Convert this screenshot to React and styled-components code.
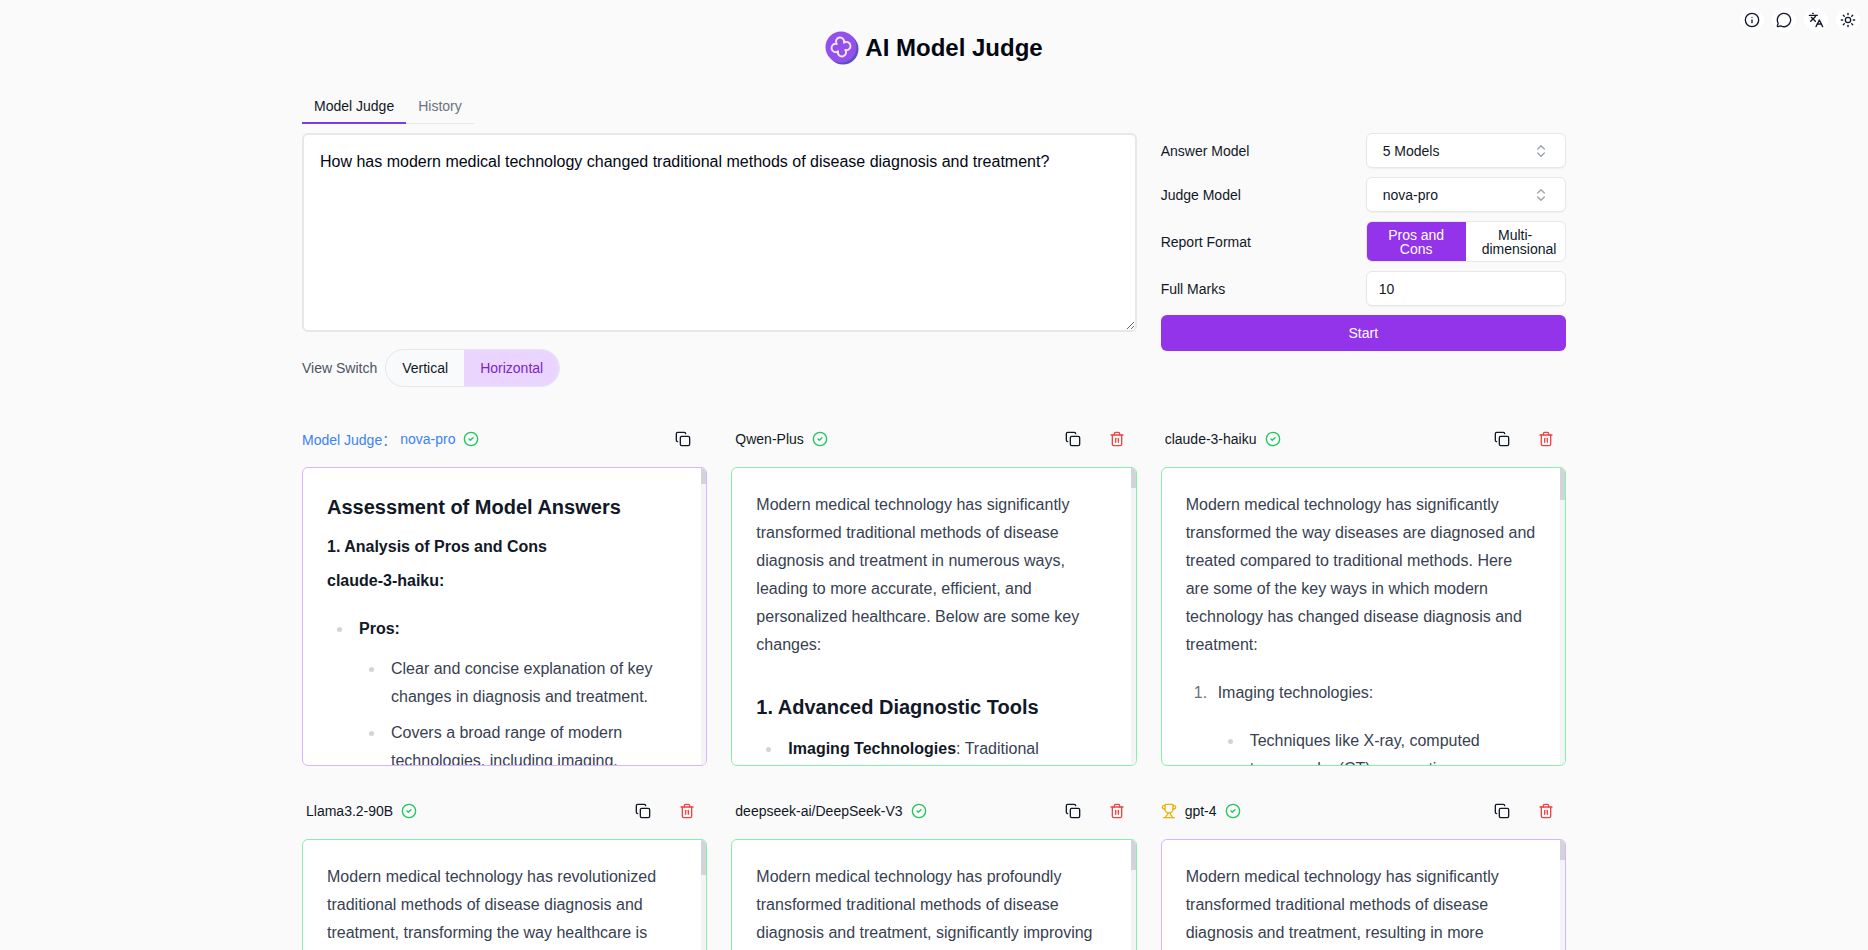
import React from "react"
import styled, { createGlobalStyle } from "styled-components"
import { Info, MessageCircle, Languages, Sun, ChevronsUpDown, Copy, Trash2, CircleCheck, Trophy } from "lucide-react"

const GlobalStyle = createGlobalStyle`
  html, body {
    margin: 0;
    height: 100%;
    overflow: hidden;
    background: #fafafa;
    font-family: "Liberation Sans", Arial, "Noto Sans CJK SC", sans-serif;
    color: #111827;
  }
  * { box-sizing: border-box; }
`

const Logo = () => (
  <svg width="34" height="34" viewBox="0 0 34 34">
    <circle cx="18" cy="18" r="15.5" fill="#5b4ec7" />
    <circle cx="16" cy="16" r="15.5" fill="#9350ea" />
    <path
      d="M12.33 12.33A4.1 4.1 0 1 1 19.67 12.33A4.1 4.1 0 1 1 19.67 19.67A4.1 4.1 0 1 1 12.33 19.67A4.1 4.1 0 1 1 12.33 12.33Z"
      transform="rotate(-10 16 16)"
      fill="none"
      stroke="#f3e8ff"
      strokeWidth="1.9"
      strokeLinejoin="round"
    />
  </svg>
)

const Card = ({ title, judge, trophy, purple, removable = true, thumb, children }) => (
  <Column>
    <CardHeader $flush={judge || trophy}>
      <CardTitle $judge={judge}>
        {trophy && <Trophy size={16} color="#eab308" />}
        {judge ? <><JudgeLabel>Model Judge：</JudgeLabel><span>{title}</span></> : <span>{title}</span>}
        <CircleCheck size={16} color="#22c55e" />
      </CardTitle>
      <CardActions $single={!removable}>
        <IconButton><Copy size={16} color="#111827" /></IconButton>
        {removable && <IconButton><Trash2 size={16} color="#ef4444" /></IconButton>}
      </CardActions>
    </CardHeader>
    <CardBody $purple={purple}>
      <Prose>{children}</Prose>
      <ScrollTrack><ScrollThumb $height={thumb} /></ScrollTrack>
    </CardBody>
  </Column>
)

const App = () => {
  return <Page>
    <GlobalStyle />
    <Header>
      <span />
      <Brand><Logo /><Title>AI Model Judge</Title></Brand>
      <TopActions>
        <RoundButton><Info size={16} /></RoundButton>
        <RoundButton><MessageCircle size={16} /></RoundButton>
        <RoundButton><Languages size={16} /></RoundButton>
        <RoundButton><Sun size={16} /></RoundButton>
      </TopActions>
    </Header>

    <Main>
      <Tabs>
        <Tab $active>Model Judge</Tab>
        <Tab>History</Tab>
      </Tabs>

      <Grid>
        <FormLeft>
          <Question
            readOnly
            defaultValue="How has modern medical technology changed traditional methods of disease diagnosis and treatment?"
          />
          <ViewRow>
            <ViewLabel>View Switch</ViewLabel>
            <Switch>
              <SwitchItem>Vertical</SwitchItem>
              <SwitchItem $on>Horizontal</SwitchItem>
            </Switch>
          </ViewRow>
        </FormLeft>

        <Settings>
          <SettingRow>
            <label>Answer Model</label>
            <SelectBox>5 Models<ChevronsUpDown size={16} color="#9ca3af" /></SelectBox>
          </SettingRow>
          <SettingRow>
            <label>Judge Model</label>
            <SelectBox>nova-pro<ChevronsUpDown size={16} color="#9ca3af" /></SelectBox>
          </SettingRow>
          <SettingRow>
            <label>Report Format</label>
            <Segments>
              <Segment $on>Pros and Cons</Segment>
              <Segment>Multi-dimensional</Segment>
            </Segments>
          </SettingRow>
          <SettingRow>
            <label>Full Marks</label>
            <MarksInput readOnly defaultValue="10" />
          </SettingRow>
          <StartButton>Start</StartButton>
        </Settings>
      </Grid>

      <Results>
        <Card title="nova-pro" judge purple removable={false} thumb={16}>
          <h3>Assessment of Model Answers</h3>
          <h4>1. Analysis of Pros and Cons</h4>
          <p><strong>claude-3-haiku:</strong></p>
          <ul>
            <li>
              <strong>Pros:</strong>
              <ul>
                <li>Clear and concise explanation of key changes in diagnosis and treatment.</li>
                <li>Covers a broad range of modern technologies, including imaging, telemedicine and robotics.</li>
              </ul>
            </li>
          </ul>
        </Card>

        <Card title="Qwen-Plus" thumb={20}>
          <p>Modern medical technology has significantly transformed traditional methods of disease diagnosis and treatment in numerous ways, leading to more accurate, efficient, and personalized healthcare. Below are some key changes:</p>
          <h3>1. Advanced Diagnostic Tools</h3>
          <ul>
            <li><strong>Imaging Technologies</strong>: Traditional diagnostic methods relied on physical examination.</li>
          </ul>
        </Card>

        <Card title="claude-3-haiku" thumb={32}>
          <p>Modern medical technology has significantly transformed the way diseases are diagnosed and treated compared to traditional methods. Here are some of the key ways in which modern technology has changed disease diagnosis and treatment:</p>
          <ol>
            <li>
              Imaging technologies:
              <ul>
                <li>Techniques like X-ray, computed tomography (CT), magnetic resonance imaging (MRI)</li>
              </ul>
            </li>
          </ol>
        </Card>

        <Card title="Llama3.2-90B" thumb={35}>
          <p>Modern medical technology has revolutionized traditional methods of disease diagnosis and treatment, transforming the way healthcare is delivered and improving patient outcomes.</p>
        </Card>

        <Card title="deepseek-ai/DeepSeek-V3" thumb={30}>
          <p>Modern medical technology has profoundly transformed traditional methods of disease diagnosis and treatment, significantly improving accuracy, efficiency, and patient outcomes.</p>
        </Card>

        <Card title="gpt-4" trophy purple thumb={20}>
          <p>Modern medical technology has significantly transformed traditional methods of disease diagnosis and treatment, resulting in more accurate and effective care.</p>
        </Card>
      </Results>
    </Main>
  </Page>
}

const Page = styled.div`
  height: 100vh;
  overflow: hidden;
`

const Header = styled.header`
  display: grid;
  grid-template-columns: 1fr auto 1fr;
  height: 93px;
`

const Brand = styled.div`
  display: flex;
  align-items: center;
  gap: 6px;
  height: 64px;
  padding-top: 32px;
`

const Title = styled.h1`
  margin: 0;
  font-size: 24px;
  line-height: 32px;
  font-weight: 700;
  color: #030712;
`

const TopActions = styled.div`
  display: flex;
  justify-content: flex-end;
  gap: 8px;
  height: 24px;
  margin-top: 8px;
  padding-right: 8px;
`

const RoundButton = styled.button`
  display: flex;
  align-items: center;
  justify-content: center;
  width: 24px;
  height: 24px;
  padding: 0;
  border: 0;
  border-radius: 50%;
  background: #fff;
  color: #111827;
`

const Main = styled.main`
  width: 1264px;
  margin: 0 auto;
`

const Tabs = styled.div`
  display: inline-flex;
  border-bottom: 1px solid #e5e7eb;
  height: 31px;
  vertical-align: top;
`

const Tab = styled.div`
  height: 31px;
  padding: 5px 12px 0;
  font-size: 14px;
  line-height: 16px;
  color: ${({ $active }) => ($active ? "#111827" : "#6b7280")};
  border-bottom: 2px solid ${({ $active }) => ($active ? "#7c3aed" : "transparent")};
`

const Grid = styled.div`
  display: grid;
  grid-template-columns: repeat(3, 1fr);
  column-gap: 24px;
  margin-top: 9px;
`

const FormLeft = styled.div`
  grid-column: span 2;
`

const Question = styled.textarea`
  display: block;
  width: 100%;
  height: 199px;
  padding: 15px 16px;
  border: 2px solid #e5e7eb;
  border-radius: 6px;
  background: #fff;
  font: 16px/24px "Liberation Sans", Arial, sans-serif;
  color: #030712;
  outline: none;
`

const ViewRow = styled.div`
  display: flex;
  align-items: center;
  gap: 8px;
  margin-top: 17px;
`

const ViewLabel = styled.span`
  font-size: 14px;
  color: #4b5563;
`

const Switch = styled.div`
  display: flex;
  height: 38px;
  border: 1px solid #e5e7eb;
  border-radius: 19px;
  overflow: hidden;
  background: #f9fafb;
`

const SwitchItem = styled.div`
  display: flex;
  align-items: center;
  padding: 0 16px;
  font-size: 14px;
  color: ${({ $on }) => ($on ? "#7e22ce" : "#111827")};
  background: ${({ $on }) => ($on ? "#e9d5ff" : "transparent")};
`

const Settings = styled.div`
  display: flex;
  flex-direction: column;
  gap: 9px;
`

const SettingRow = styled.div`
  display: grid;
  grid-template-columns: 205px 200px;
  align-items: center;
  font-size: 14px;
  color: #111827;
`

const SelectBox = styled.div`
  display: flex;
  align-items: center;
  justify-content: space-between;
  height: 35px;
  padding: 0 16px;
  background: #fff;
  border: 1px solid #e5e7eb;
  border-radius: 6px;
  box-shadow: 0 1px 1px rgba(0, 0, 0, 0.04);
  font-size: 14px;
`

const Segments = styled.div`
  display: grid;
  grid-template-columns: 99px 1fr;
  height: 41px;
  background: #fff;
  border: 1px solid #e5e7eb;
  border-radius: 6px;
  overflow: hidden;
`

const Segment = styled.div`
  align-self: center;
  min-width: 0;
  padding: 0 16px;
  text-align: center;
  font-size: 14px;
  line-height: 14px;
  color: ${({ $on }) => ($on ? "#fff" : "#111827")};

  ${({ $on }) => $on && `
    align-self: stretch;
    display: flex;
    align-items: center;
    background: #9333ea;
  `}
`

const MarksInput = styled.input`
  width: 100%;
  height: 35px;
  padding: 0 12px;
  background: #fff;
  border: 1px solid #e5e7eb;
  border-radius: 6px;
  box-shadow: 0 1px 1px rgba(0, 0, 0, 0.04);
  font: 14px "Liberation Sans", Arial, sans-serif;
  color: #111827;
  outline: none;
`

const StartButton = styled.button`
  height: 36px;
  border: 0;
  border-radius: 6px;
  background: #9333ea;
  color: #fff;
  font: 14px "Liberation Sans", Arial, sans-serif;
`

const Results = styled.div`
  display: grid;
  grid-template-columns: repeat(3, 1fr);
  column-gap: 24px;
  row-gap: 29px;
  margin-top: 36px;
`

const Column = styled.section`
  display: flex;
  flex-direction: column;
  gap: 12px;
  min-width: 0;
`

const CardHeader = styled.div`
  display: flex;
  align-items: center;
  justify-content: space-between;
  height: 32px;
  padding-left: ${({ $flush }) => ($flush ? "0" : "4px")};
`

const CardTitle = styled.div`
  display: flex;
  align-items: center;
  gap: 8px;
  font-size: 14px;
  color: ${({ $judge }) => ($judge ? "#3b82f6" : "#111827")};
`

const JudgeLabel = styled.span`
  margin-right: -4px;
`

const CardActions = styled.div`
  display: flex;
  gap: 12px;
  padding-right: ${({ $single }) => ($single ? "8px" : "4px")};
`

const IconButton = styled.button`
  display: flex;
  align-items: center;
  justify-content: center;
  width: 32px;
  height: 32px;
  padding: 0;
  border: 0;
  background: transparent;
`

const CardBody = styled.div`
  position: relative;
  height: 299px;
  background: #fff;
  border: 1px solid ${({ $purple }) => ($purple ? "#d8b4fe" : "#86efac")};
  border-radius: 6px;
  overflow: hidden;
`

const ScrollTrack = styled.div`
  position: absolute;
  top: 0;
  right: 0;
  bottom: 0;
  width: 5px;
  background: #f3f4f6;
`

const ScrollThumb = styled.div`
  height: ${({ $height }) => $height}px;
  background: #d1d5db;
`

const Prose = styled.div`
  padding: 23px 29px 23px 24px;
  font-size: 16px;
  line-height: 28px;
  color: #374151;

  h3 {
    margin: 32px 0 12px;
    font-size: 20px;
    line-height: 32px;
    font-weight: 700;
    color: #111827;
  }
  h3:first-child { margin-top: 0; margin-bottom: 10px; }
  h4 {
    margin: 0 0 6px;
    font-size: 16px;
    line-height: 28px;
    font-weight: 700;
    color: #111827;
  }
  p { margin: 0; }
  strong { font-weight: 700; color: #111827; }
  ul, ol {
    margin: 20px 0;
    padding-left: 26px;
  }
  ul { list-style-type: disc; }
  h3 + ul { margin-top: 12px; }
  li {
    margin: 8px 0;
    padding-left: 6px;
  }
  li:first-child { margin-top: 0; }
  ul ul { margin: 12px 0; }
  ol ul { margin: 20px 0; }
  ol > li::marker { color: #6b7280; }
  ul > li::marker { color: #d1d5db; }
`

export default App
